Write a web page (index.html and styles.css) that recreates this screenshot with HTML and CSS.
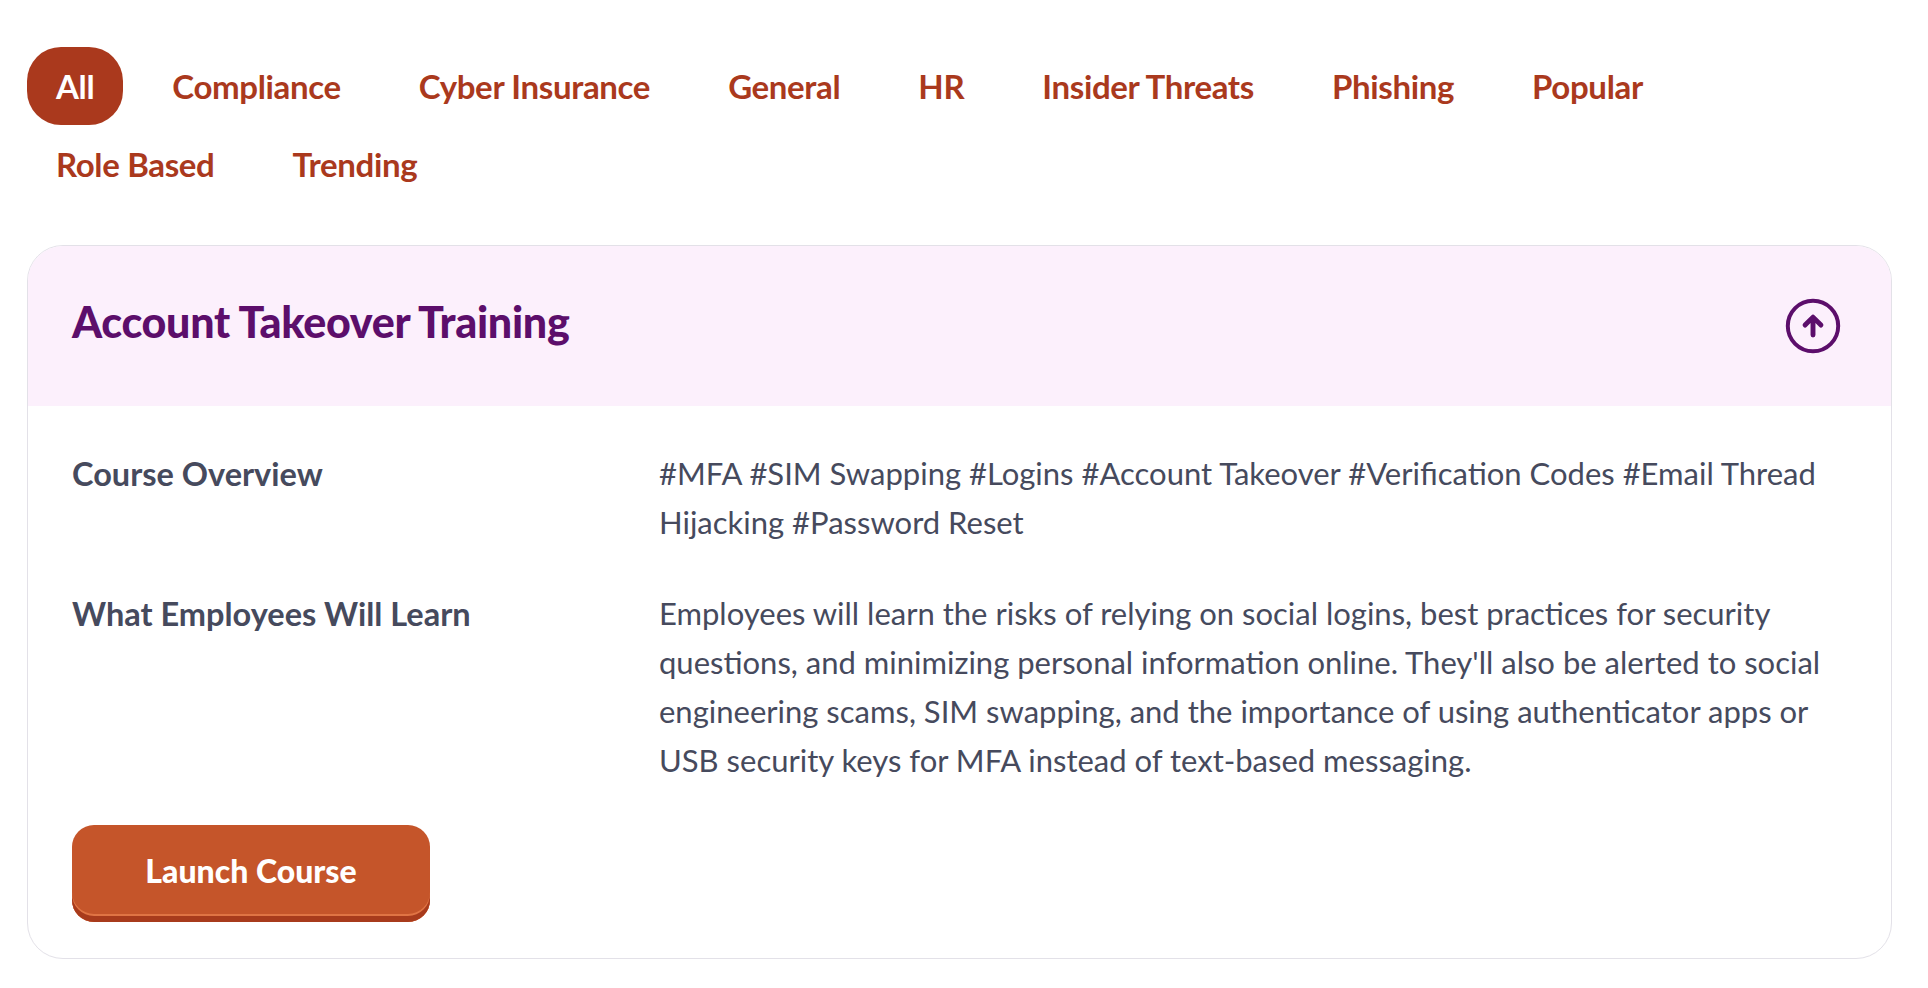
FILE: index.html
```html
<!DOCTYPE html>
<html lang="en">
<head>
<meta charset="utf-8">
<title>Courses</title>
<link rel="stylesheet" href="styles.css">
</head>
<body>
<main class="page">
  <nav class="tabs">
    <a class="tab active">All</a>
    <a class="tab">Compliance</a>
    <a class="tab">Cyber Insurance</a>
    <a class="tab">General</a>
    <a class="tab">HR</a>
    <a class="tab">Insider Threats</a>
    <a class="tab">Phishing</a>
    <a class="tab">Popular</a>
    <a class="tab">Role Based</a>
    <a class="tab">Trending</a>
  </nav>

  <section class="card">
    <header class="card-head">
      <h2 class="card-title">Account Takeover Training</h2>
      <button class="toggle" aria-label="Collapse">
        <svg viewBox="0 0 24 24" width="56" height="56" fill="none" stroke="currentColor" stroke-linecap="round" stroke-linejoin="round">
          <circle cx="12" cy="12" r="10.8" stroke-width="1.7"/>
          <path d="M12 15.9V8.4M8.6 11.6L12 8.2l3.4 3.4" stroke-width="2.1"/>
        </svg>
      </button>
    </header>
    <div class="card-body">
      <dl class="details">
        <dt>Course Overview</dt>
        <dd>#MFA #SIM Swapping #Logins #Account Takeover #Verification Codes #Email Thread Hijacking #Password Reset</dd>
        <dt>What Employees Will Learn</dt>
        <dd>Employees will learn the risks of relying on social logins, best practices for security questions, and minimizing personal information online. They'll also be alerted to social engineering scams, SIM swapping, and the importance of using authenticator apps or USB security keys for MFA instead of text-based messaging.</dd>
      </dl>
      <button class="launch">Launch Course</button>
    </div>
  </section>
</main>
</body>
</html>
```

FILE: styles.css
```css
* { box-sizing: border-box; }
html, body { margin: 0; padding: 0; background: #ffffff; }
body { font-family: Lato, "Open Sans", sans-serif; }

.page {
  padding: 47px 36px 0 27px;
}

.tabs {
  display: flex;
  flex-wrap: wrap;
  column-gap: 20px;
  row-gap: 0;
}
.tab {
  display: flex;
  align-items: center;
  height: 78px;
  padding: 0 29px;
  border-radius: 34px;
  font-size: 33px;
  font-weight: 700;
  color: #aa391d;
  letter-spacing: -0.35px;
  cursor: pointer;
}
.tab.active {
  background: #aa391d;
  color: #ffffff;
}

.card {
  margin-top: 42px;
  border: 1px solid #e3e1e8;
  border-radius: 36px;
  overflow: hidden;
}
.card-head {
  display: flex;
  align-items: center;
  justify-content: space-between;
  height: 160px;
  padding: 0 50px 0 44px;
  background: #fcf0fc;
}
.card-title {
  margin: 0 0 10px 0;
  font-size: 43px;
  font-weight: 900;
  color: #5c0e6b;
  letter-spacing: -0.3px;
}
.toggle {
  display: flex;
  padding: 0;
  border: 0;
  background: none;
  color: #5c0e6b;
  cursor: pointer;
}

.card-body {
  padding: 43px 44px 36px 44px;
}
.details {
  display: grid;
  grid-template-columns: 587px 1fr;
  row-gap: 42px;
  margin: 0;
  font-size: 31px;
  line-height: 49px;
  color: #464a5d;
}
.details dt {
  font-weight: 700;
  font-size: 32.5px;
}
.details dd {
  margin: 0;
  font-weight: 400;
}

.launch {
  margin-top: 40px;
  width: 358px;
  height: 97px;
  border: 0;
  border-radius: 22px;
  background: #c5552a;
  box-shadow: inset 0 -6px 0 #a83b1c, inset 0 -8px 0 #e07444;
  color: #ffffff;
  font-family: Lato, sans-serif;
  font-size: 32px;
  font-weight: 900;
  padding-bottom: 8px;
  cursor: pointer;
}
```
